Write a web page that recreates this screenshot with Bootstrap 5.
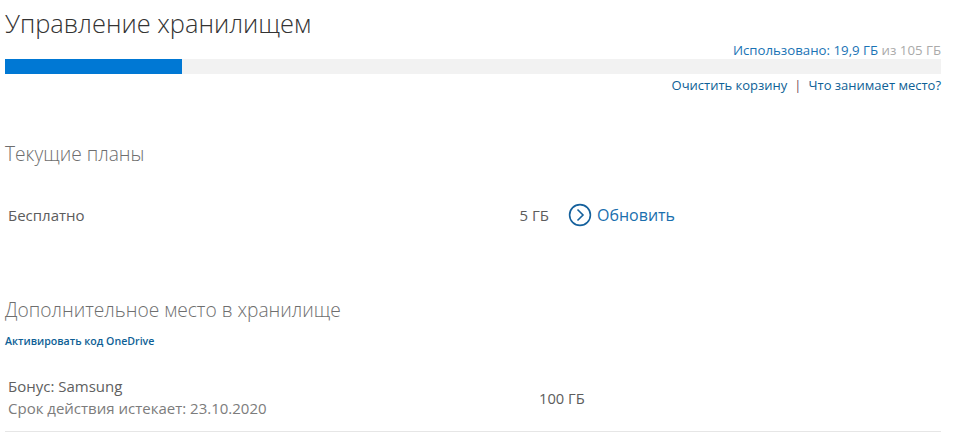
<!DOCTYPE html>
<html lang="ru">

<head>
    <meta charset="UTF-8">
    <meta name="viewport" content="width=device-width, initial-scale=1.0">
    <title>Управление хранилищем</title>
    <link href="https://cdn.jsdelivr.net/npm/bootstrap@5.3.0/dist/css/bootstrap.min.css" rel="stylesheet">
    <style>
        body { font-family: "Open Sans", "Noto Sans", sans-serif; color: #5c5c5c; background: #fff; overflow: hidden; }
        a { text-decoration: none; color: #0e5f96; }
        .storage-page { width: 936px; margin-left: 5px; }
        .page-title { font-size: 25.4px; font-weight: 300; line-height: 32px; color: #333; margin: 7px 0 0; }
        .usage-line { font-size: 13.25px; line-height: 18px; margin-top: 2px; color: #aaa; }
        .usage-line span { color: #1a73b5; }
        .usage-bar { height: 15px; background: #f2f2f2; margin-top: 0; border-radius: 0; }
        .usage-bar .progress-bar { background: #0078d4; }
        .usage-links { font-size: 13px; line-height: 18px; margin-top: 2px; }
        .usage-links i { font-style: normal; color: #7a4a55; margin: 0 7px; }
        .section-title { font-size: 19.2px; font-weight: 300; line-height: 26px; color: #6e6e6e; margin: 0; }
        .plans-title { margin-top: 47px; }
        .plan-row { font-size: 15px; line-height: 20px; padding-left: 3px; }
        .plan-free { margin-top: 36px; height: 24px; }
        .plan-name { width: 150px; }
        .plan-size { width: 391px; text-align: right; }
        .plan-update { font-size: 16px; color: #1a6fae; margin-left: 19px; gap: 5px; }
        .extra-title { margin-top: 70px; }
        .code-link { font-size: 10.6px; font-weight: 600; line-height: 14px; margin-top: 11px; display: block; }
        .bonus-row { margin-top: 27px; padding-bottom: 10px; border-bottom: 1px solid #e6e6e6; }
        .bonus-name { width: 531px; color: #606060; line-height: 22px; padding-bottom: 2px; }
        .bonus-name div + div { color: #7c7c7c; }
        .bonus-size { font-weight: 500; font-size: 14.7px; color: #5c5c5c; }
    </style>
</head>

<body>
    <div class="storage-page">
        <h1 class="page-title">Управление хранилищем</h1>
        <div class="usage-line text-end"><span>Использовано: 19,9 ГБ</span> из 105 ГБ</div>
        <div class="progress usage-bar">
            <div class="progress-bar" style="width: 18.9%"></div>
        </div>
        <div class="usage-links text-end">
            <a href="#">Очистить корзину</a><i>|</i><a href="#">Что занимает место?</a>
        </div>

        <h2 class="section-title plans-title">Текущие планы</h2>
        <div class="plan-row plan-free d-flex align-items-center">
            <div class="plan-name flex-shrink-0">Бесплатно</div>
            <div class="plan-size flex-shrink-0">5 ГБ</div>
            <a href="#" class="plan-update d-flex align-items-center">
                <svg width="24" height="24" viewBox="0 0 24 24" fill="none" stroke="#14609c" stroke-width="1.6">
                    <circle cx="12" cy="12" r="10.4"></circle>
                    <path d="M9.5 6.5 15 12l-5.5 5.5"></path>
                </svg>
                Обновить
            </a>
        </div>

        <h2 class="section-title extra-title">Дополнительное место в хранилище</h2>
        <a href="#" class="code-link">Активировать код OneDrive</a>
        <div class="plan-row bonus-row d-flex align-items-center">
            <div class="bonus-name flex-shrink-0">
                <div>Бонус: Samsung</div>
                <div>Срок действия истекает: 23.10.2020</div>
            </div>
            <div class="bonus-size">100 ГБ</div>
        </div>
    </div>

    <script src="https://cdn.jsdelivr.net/npm/bootstrap@5.3.0/dist/js/bootstrap.bundle.min.js"></script>
</body>

</html>
